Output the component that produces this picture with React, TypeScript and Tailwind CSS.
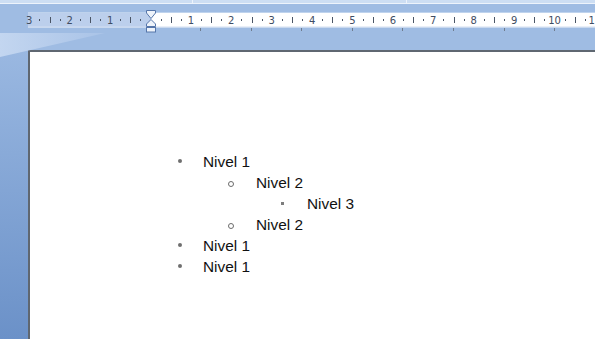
import React from 'react'

const UNIT = 40.4
const ORIGIN = 150.5

const listItems = [
  { text: 'Nivel 1', level: 1 },
  { text: 'Nivel 2', level: 2 },
  { text: 'Nivel 3', level: 3 },
  { text: 'Nivel 2', level: 2 },
  { text: 'Nivel 1', level: 1 },
  { text: 'Nivel 1', level: 1 },
]

const levelStyles: Record<number, { indent: string; box: string; bullet: string }> = {
  1: { indent: 'pl-[147.5px]', box: 'w-[25.5px]', bullet: 'w-[4px] h-[4px] rounded-full bg-[#6f6f6f] -mt-[1px]' },
  2: { indent: 'pl-[198px]', box: 'w-[28px]', bullet: 'w-[6px] h-[6px] rounded-full border border-[#6b6b6b] mt-[3px]' },
  3: { indent: 'pl-[251px]', box: 'w-[26px]', bullet: 'w-[3px] h-[3px] bg-[#7d7d7d]' },
}

function Ruler() {
  // y values in this svg are page y minus 4
  const ticks: React.ReactNode[] = []
  for (let k = -3; k <= 11; k++) {
    const x = ORIGIN + k * UNIT
    if (k !== 0) {
      ticks.push(
        <text
          key={`n${k}`}
          x={x}
          y={20}
          textAnchor="middle"
          fontSize="10"
          fill="#3f4d63"
          fontFamily="'DejaVu Sans', 'Liberation Sans', sans-serif"
        >
          {Math.abs(k)}
        </text>
      )
    }
    const q1 = x + UNIT / 4
    const half = x + UNIT / 2
    const q3 = x + (UNIT * 3) / 4
    ticks.push(<rect key={`a${k}`} x={Math.round(q1)} y={15} width={1} height={2} fill="#4b5565" />)
    ticks.push(<rect key={`b${k}`} x={Math.round(half)} y={13} width={1} height={6} fill="#4b5565" />)
    ticks.push(<rect key={`c${k}`} x={Math.round(q3)} y={15} width={1} height={2} fill="#4b5565" />)
  }

  const tabs = Array.from({ length: 8 }, (_, i) => Math.round(200 + i * 50.6))

  return (
    <svg width={595} height={46} className="block">
      <rect x={28} y={8.5} width={567} height={15} fill="#dfe9f7" />
      <rect x={28} y={9} width={123} height={14} fill="#bccfec" />
      <rect x={151} y={9} width={444} height={14} fill="#ffffff" />
      <rect x={28} y={22.5} width={567} height={1} fill="#d4e0f1" />
      {ticks}
      {tabs.map((x) => (
        <rect key={x} x={x} y={24} width={1} height={3} fill="#6f7c8f" />
      ))}
      {/* indent markers */}
      <g fill="#eef3fa" stroke="#5676aa" strokeWidth={1}>
        <polygon points="146.5,6.5 155.5,6.5 155.5,9 151,14.5 146.5,9" />
        <polygon points="151,15.5 155.5,20 155.5,22.5 146.5,22.5 146.5,20" />
        <rect x={146.5} y={23.5} width={9} height={4.5} />
      </g>
    </svg>
  )
}

export default function App() {
  return (
    <div
      className="relative w-[595px] h-[339px] overflow-hidden bg-[#9fbce3] flex flex-col"
      style={{ fontFamily: "'Liberation Sans', Arial, sans-serif" }}
    >
      {/* strip above the ruler */}
      <div className="flex h-[4px]">
        <div className="w-[193px] bg-[#cddef3] border-b border-r border-[#edf3fb]" />
        <div className="w-[214px] bg-[#cddef3] border-b border-r border-[#edf3fb]" />
        <div className="flex-1 bg-[#cddef3] border-b border-[#edf3fb]" />
      </div>

      <Ruler />

      <div className="flex flex-1">
        <div className="w-[28px] bg-gradient-to-b from-[#9ab8e1] to-[#6b91c8]" />
        <div className="flex-1 bg-white border-l-2 border-t-2 border-[#5f6771] pt-[99px]">
          {listItems.map((item, index) => {
            const s = levelStyles[item.level]
            return (
              <div key={index} className={`flex items-center h-[21px] ${s.indent}`}>
                <div className={`${s.box} flex items-center`}>
                  <span className={`block ${s.bullet}`} />
                </div>
                <span className="text-[15.4px] leading-[21px] text-[#111]">{item.text}</span>
              </div>
            )
          })}
        </div>
      </div>

      {/* window shine on the left */}
      <svg width={110} height={30} className="absolute left-0 top-[33px] pointer-events-none">
        <defs>
          <linearGradient id="shine" x1="0" y1="0" x2="1" y2="0">
            <stop offset="0" stopColor="#c3d6f0" />
            <stop offset="1" stopColor="#a9c3e7" />
          </linearGradient>
        </defs>
        <polygon points="0,0 105,0 0,24" fill="url(#shine)" />
      </svg>
    </div>
  )
}
